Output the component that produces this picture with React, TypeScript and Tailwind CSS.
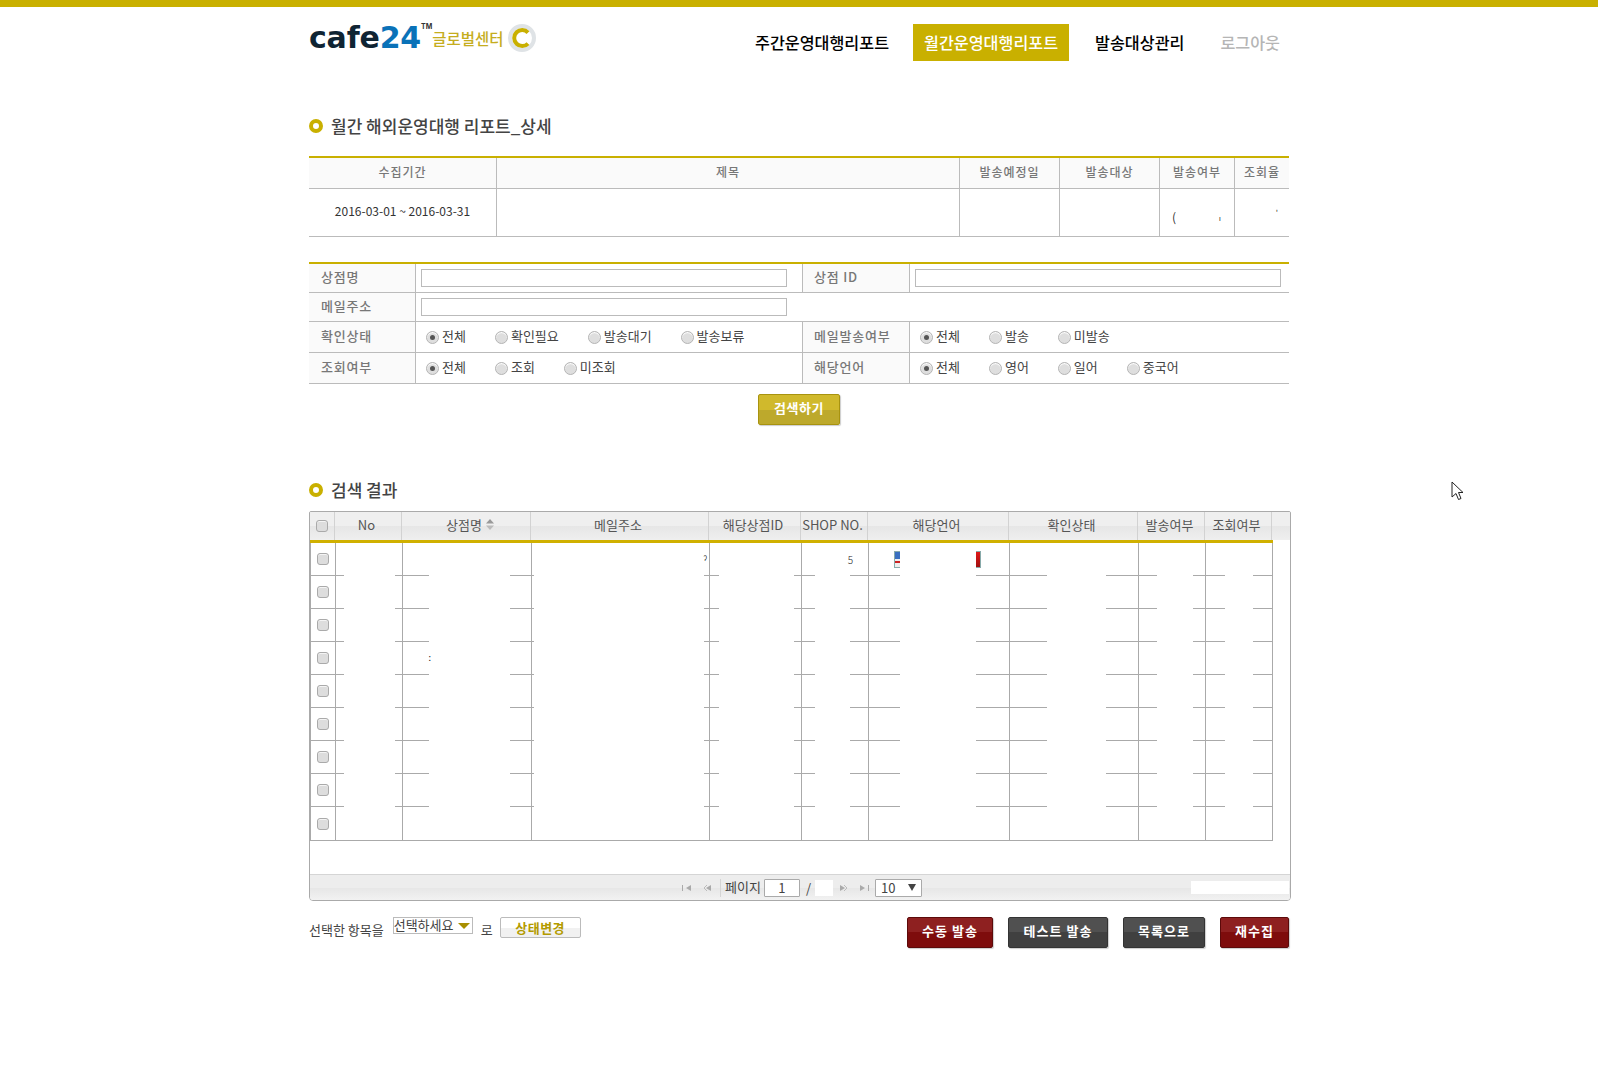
const KR = "font-['Noto_Sans_CJK_KR','Liberation_Sans',sans-serif]";

const columns = "grid-cols-[25px_67px_129px_178px_92px_67px_141px_129px_67px_67px]";
const headCols = ["No", "상점명", "메일주소", "해당상점ID", "SHOP NO.", "해당언어", "확인상태", "발송여부", "조회여부"];

// row lines are broken where the cell text was blanked out: [gap before, length]
const rowLine = [
  [0, 33], [51, 34], [81, 24], [170, 15], [75, 21], [35, 50], [76, 71], [59, 51], [36, 32], [28, 19],
];

function Radio({ label, checked }: { label: string; checked?: boolean }) {
  return (
    <label className="flex items-center mr-[28px]">
      <span className="w-[13px] h-[13px] rounded-full border border-[#b5b5b5] bg-[#dedede] flex items-center justify-center mr-[3px] shadow-[inset_0_1px_1px_#fff]">
        {checked && <span className="w-[5px] h-[5px] rounded-full bg-[#555]" />}
      </span>
      <span className="text-[13px] font-normal text-[#444] -mt-[2px] mr-[1px]">{label}</span>
    </label>
  );
}

function Check() {
  return <span className="block w-[12px] h-[12px] rounded-[3px] border border-[#aaa] bg-[#dddddd] shadow-[inset_0_1px_0_#f4f4f4]" />;
}

function Title({ text }: { text: string }) {
  return (
    <h2 className="flex items-center">
      <span className="w-[14px] h-[14px] rounded-full border-[4px] border-[#c9b000] mr-[8px]" />
      <span className="text-[17px] font-medium text-[#444] leading-none">{text}</span>
    </h2>
  );
}

function Logo() {
  return (
    <div className="flex items-center h-[37px] -mt-[5px]">
      <span className="font-['DejaVu_Sans',sans-serif] font-bold text-[30px] leading-none tracking-[-0.2px] text-[#0f2433]">
        cafe<span className="text-[#0a72b8]">24</span>
      </span>
      <span className="font-['Inter',sans-serif] text-[7px] font-bold text-[#333] self-start mt-[3px]">TM</span>
      <span className="text-[15.5px] font-medium text-[#c5ad1e] mt-[3px]">글로벌센터</span>
      <svg width="30" height="30" viewBox="0 0 30 30" className="ml-[3px]">
        <circle cx="15" cy="15" r="12" fill="none" stroke="#dfe3e6" strokeWidth="4" />
        <path d="M21 9.500A8 8 0 1 0 21 20.500" fill="none" stroke="#c9b000" strokeWidth="4" />
      </svg>
    </div>
  );
}

function Button({ text, w, dark }: { text: string; w: string; dark?: boolean }) {
  return (
    <button className={`${w} h-[31px] pb-[3px] rounded-[2px] border text-[13px] font-bold text-white tracking-[1px] shadow-[1px_1px_1px_#ccc] ${dark ? "border-[#333] bg-[linear-gradient(#505050_50%,#404040_50%)]" : "border-[#5c0a0a] bg-[linear-gradient(#8e2020_50%,#7e0c0c_50%)]"}`}>
      {text}
    </button>
  );
}

function PagerIcon({ flip, bar }: { flip?: boolean; bar?: boolean }) {
  return (
    <svg width="12" height="8" viewBox="0 0 12 8" className={flip ? "-scale-x-100" : ""}>
      {bar ? <rect x="1" y="1" width="1" height="6" fill="#aaa" /> : <path d="M6 1 3 4l3 3" fill="none" stroke="#bbb" />}
      <path d="M10 1v6L5 4z" fill="#aaa" />
    </svg>
  );
}

function Label({ text, first }: { text: string; first?: boolean }) {
  return (
    <div className={`w-[107px] shrink-0 bg-[#fafafa] border-r border-[#bbb] pb-[2px] flex items-center ${first ? "pl-[12px]" : "pl-[11px]"}`}>
      {text}
    </div>
  );
}

export default function App() {
  return (
    <div className={`min-h-[1085px] bg-white ${KR}`}>
      <div className="h-[7px] bg-[#c9b000]" />
      <div className="w-[980px] mx-auto relative">
        <header className="flex items-start justify-between pt-[17px] h-[110px]">
          <Logo />
          <nav className="flex items-center text-[16.2px] font-medium text-black mr-[9px] h-[37px]">
            <a className="mr-[24px]">주간운영대행리포트</a>
            <a className="w-[156px] h-[37px] bg-[#c9b000] text-white flex items-center justify-center mr-[26px]">월간운영대행리포트</a>
            <a className="mr-[36px]">발송대상관리</a>
            <a className="text-[#b5b5b5]">로그아웃</a>
          </nav>
        </header>

        <Title text="월간 해외운영대행 리포트_상세" />

        <div className="mt-[22px] border-t-2 border-[#c9b000] border-b border-b-[#bbb] text-[12px]">
          <div className="grid grid-cols-[188px_463px_100px_100px_75px_54px] h-[31px] bg-[#fafafa] border-b border-[#bbb] text-[#777] font-medium text-center tracking-[1px] items-stretch">
            {["수집기간", "제목", "발송예정일", "발송대상", "발송여부", "조회율"].map((t, i) => (
              <div key={t} className={`flex items-center justify-center pb-[2px] ${i < 5 ? "border-r border-[#bbb]" : ""}`}>{t}</div>
            ))}
          </div>
          <div className="grid grid-cols-[188px_463px_100px_100px_75px_54px] h-[47px]">
            <div className="border-r border-[#bbb] flex items-center justify-center pb-[4px] text-[#333]">2016-03-01 ~ 2016-03-31</div>
            <div className="border-r border-[#bbb]" />
            <div className="border-r border-[#bbb]" />
            <div className="border-r border-[#bbb]" />
            <div className="border-r border-[#bbb] flex justify-between pl-[12px] pr-[13px] pt-[22px] text-[#333] leading-none">
              <span>(</span>
              <span className="text-[8px] mt-[3px]">ı</span>
            </div>
            <div className="flex justify-end pr-[11px] pt-[20px] text-[#333] text-[8px] leading-none">'</div>
          </div>
        </div>

        <div className="mt-[25px] border-t-2 border-[#c9b000] text-[13px] font-medium text-[#777] tracking-[0.8px]">
          <div className="flex h-[29px] border-b border-[#bbb]">
            <Label text="상점명" first />
            <div className="w-[387px] shrink-0 pl-[5px] flex items-center border-r border-[#bbb]">
              <div className="w-[366px] h-[18px] border border-[#bbb]" />
            </div>
            <Label text="상점 ID" />
            <div className="flex-1 pl-[5px] flex items-center">
              <div className="w-[366px] h-[18px] border border-[#bbb]" />
            </div>
          </div>
          <div className="flex h-[29px] border-b border-[#bbb]">
            <Label text="메일주소" first />
            <div className="pl-[5px] flex items-center">
              <div className="w-[366px] h-[18px] border border-[#bbb]" />
            </div>
          </div>
          <div className="flex h-[31px] border-b border-[#bbb]">
            <Label text="확인상태" first />
            <div className="w-[387px] shrink-0 pl-[10px] flex items-center border-r border-[#bbb] tracking-normal">
              <Radio label="전체" checked />
              <Radio label="확인필요" />
              <Radio label="발송대기" />
              <Radio label="발송보류" />
            </div>
            <Label text="메일발송여부" />
            <div className="flex-1 pl-[10px] flex items-center tracking-normal">
              <Radio label="전체" checked />
              <Radio label="발송" />
              <Radio label="미발송" />
            </div>
          </div>
          <div className="flex h-[31px] border-b border-[#bbb]">
            <Label text="조회여부" first />
            <div className="w-[387px] shrink-0 pl-[10px] flex items-center border-r border-[#bbb] tracking-normal">
              <Radio label="전체" checked />
              <Radio label="조회" />
              <Radio label="미조회" />
            </div>
            <Label text="해당언어" />
            <div className="flex-1 pl-[10px] flex items-center tracking-normal">
              <Radio label="전체" checked />
              <Radio label="영어" />
              <Radio label="일어" />
              <Radio label="중국어" />
            </div>
          </div>
        </div>

        <div className="flex justify-center mt-[10px] mb-[56px]">
          <button className="w-[82px] h-[31px] pb-[3px] rounded-[2px] border border-[#a8930f] bg-[linear-gradient(#d0b92c_50%,#bda92c_50%)] text-white text-[13px] font-bold tracking-[0.5px] shadow-[1px_1px_1px_#ccc]">검색하기</button>
        </div>

        <Title text="검색 결과" />

        <div className="mt-[13px] w-[982px] h-[390px] border border-[#aaa] rounded-b-[4px] rounded-t-[2px] flex flex-col overflow-hidden">
          <div className="flex h-[28px] text-[13px] text-[#555] bg-[linear-gradient(#efefef_50%,#e6e6e6_50%,#efefef)] shrink-0">
            <div className="w-[25px] border-r border-[#d2d2d2] pb-[1px] flex items-center justify-center"><Check /></div>
            <div className="grid flex-none w-[936px] grid-cols-[67px_129px_178px_92px_67px_141px_129px_67px_67px]">
              {headCols.map((t) => (
                <div key={t} className={`border-r border-[#d2d2d2] pb-[3px] flex items-center justify-center whitespace-nowrap ${t === "상점명" ? "pl-[8px]" : "pr-[3px]"}`}>
                  {t}
                  {t === "상점명" && (
                    <svg width="8" height="11" viewBox="0 0 8 11" className="ml-[4px]">
                      <path d="M4 0 8 4.500H0z" fill="#999" />
                      <path d="M4 11 8 6.500H0z" fill="#bbb" />
                    </svg>
                  )}
                </div>
              ))}
            </div>
          </div>

          <div className="w-[963px] h-[3px] bg-[#d0b000] shrink-0" />

          <div className="w-[963px] border-r border-b border-l border-[#aaa] shrink-0">
            {[0, 1, 2, 3, 4, 5, 6, 7, 8].map((r) => (
              <div key={r} className="h-[33px] flex flex-col">
                <div className={`grid ${columns} flex-1 min-h-0`}>
                  <div className="border-r border-[#aaa] flex items-center justify-center"><Check /></div>
                  <div className="border-r border-[#aaa]" />
                  <div className="border-r border-[#aaa] flex items-center justify-end text-[9px] leading-[8px] text-[#222] pr-[100px]">
                    {r === 3 ? ":" : ""}
                  </div>
                  <div className="border-r border-[#aaa] flex items-center justify-end text-[10px] text-[#222] pr-[2px]">
                    {r === 0 ? "ˀ" : ""}
                  </div>
                  <div className="border-r border-[#aaa]" />
                  <div className="border-r border-[#aaa] flex items-center justify-end text-[10px] font-light text-[#222] pr-[15px]">
                    {r === 0 ? "5" : ""}
                  </div>
                  <div className="border-r border-[#aaa] flex items-center pl-[25px]">
                    {r === 0 && (
                      <>
                        <span className="w-[6px] h-[17px] border border-r-0 border-[#8aa] bg-[linear-gradient(#3a6fc0_45%,#eee_45%,#eee_58%,#c22_58%,#c22_72%,#eee_72%)]" />
                        <span className="w-[5px] h-[17px] ml-[76px] border border-l-0 border-[#8aa] bg-[linear-gradient(#e01818,#a01010)]" />
                      </>
                    )}
                  </div>
                  <div className="border-r border-[#aaa]" />
                  <div className="border-r border-[#aaa]" />
                  <div />
                </div>
                {r < 8 && (
                  <div className="flex h-px shrink-0">
                    {rowLine.map(([gap, len], i) => (
                      <span key={i} className="h-px bg-[#aaa]" style={{ marginLeft: gap, width: len }} />
                    ))}
                  </div>
                )}
              </div>
            ))}
          </div>

          <div className="flex-1" />

          <div className="h-[26px] shrink-0 border-t border-[#d5d5d5] bg-[linear-gradient(#ededed_50%,#e6e6e6_50%,#f2f2f2)] flex items-center text-[13px] text-[#444]">
            <div className="ml-[371px] flex items-center gap-[8px]">
              <PagerIcon bar />
              <PagerIcon />
            </div>
            <span className="w-px h-[18px] bg-[#d5d5d5] ml-[7px]" />
            <span className="ml-[4px] -mt-[2px]">페이지</span>
            <span className="w-[36px] h-[18px] ml-[3px] bg-white border border-[#aaa] rounded-[1px] flex items-center justify-center text-[13px]">1</span>
            <span className="ml-[6px]">/</span>
            <span className="w-[18px] h-[16px] ml-[4px] bg-white" />
            <div className="ml-[5px] flex items-center gap-[8px]">
              <PagerIcon flip />
              <PagerIcon flip bar />
            </div>
            <div className="w-[47px] h-[18px] ml-[5px] bg-white border border-[#aaa] rounded-[1px] flex items-center justify-between px-[5px] text-[13px]">
              10
              <svg width="8" height="7" viewBox="0 0 8 7"><path d="M0 0h8L4 7z" fill="#444" /></svg>
            </div>
            <span className="ml-auto mr-[1px] w-[98px] h-[13px] bg-white" />
          </div>
        </div>

        <div className="mt-[16px] flex items-start text-[13px] text-[#444]">
          <span className="mt-[3px]">선택한 항목을</span>
          <div className="ml-[9px] w-[80px] h-[17px] pb-[2px] border border-[#bbb] flex items-center justify-between pr-[2px] leading-none">
            선택하세요
            <svg width="12" height="6" viewBox="0 0 12 6" className="mt-[3px]"><path d="M0 0h12L6 6z" fill="#a88f00" /></svg>
          </div>
          <span className="ml-[8px] mt-[3px]">로</span>
          <button className="ml-[7px] w-[81px] h-[21px] pb-[3px] rounded-[2px] border border-[#bbb] bg-[linear-gradient(#fff_50%,#f1f1f1_50%)] text-[#b39b00] font-bold tracking-[0.5px]">상태변경</button>
          <div className="ml-auto flex gap-[15px]">
            <Button text="수동 발송" w="w-[86px]" />
            <Button text="테스트 발송" w="w-[100px]" dark />
            <Button text="목록으로" w="w-[82px]" dark />
            <Button text="재수집" w="w-[69px]" />
          </div>
        </div>

        {/* mouse pointer left in the screenshot */}
        <svg width="14" height="20" viewBox="0 0 14 20" className="absolute left-[1142px] top-[474px]">
          <path d="M1 1v15l4-3.500 2.500 6 2.500-1-2.500-6H12z" fill="#fff" stroke="#222" />
        </svg>
      </div>
    </div>
  );
}
